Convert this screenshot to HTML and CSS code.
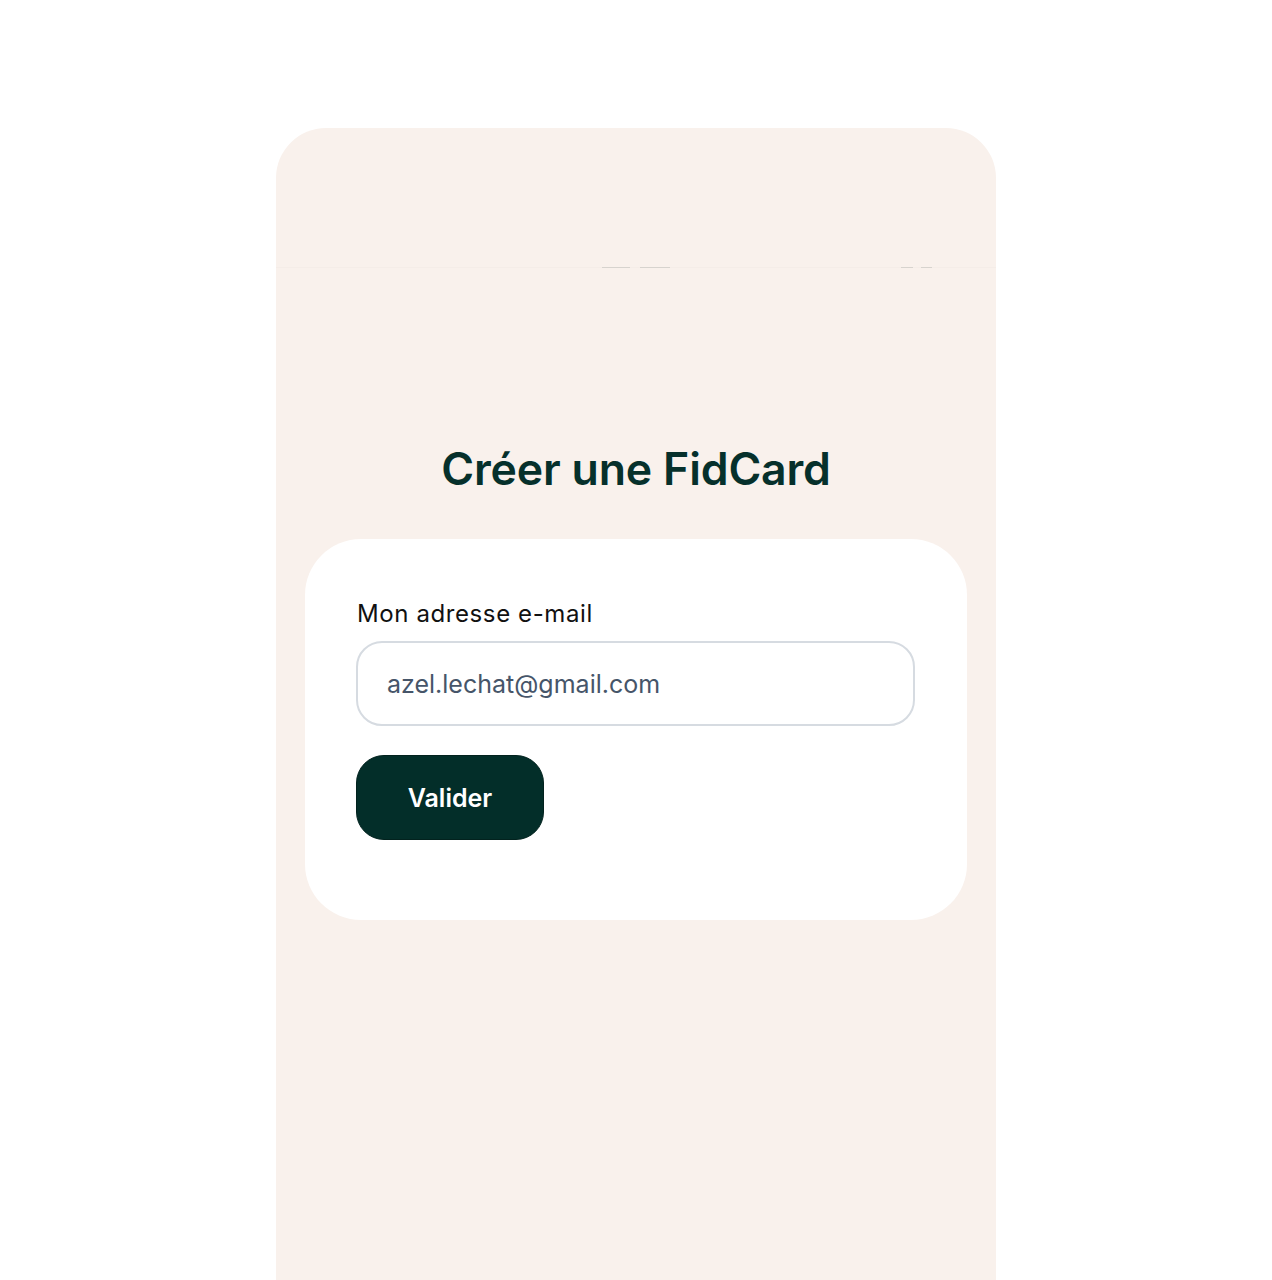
FILE: index.html
```html
<!DOCTYPE html>
<html lang="fr">
<head>
<meta charset="utf-8">
<title>Créer une FidCard</title>
<link rel="stylesheet" href="styles.css">
</head>
<body>
<main class="panel">
  <div class="top-space"></div>
  <div class="edge-line">
    <span class="dash d1"></span>
    <span class="dash d2"></span>
    <span class="dash d3"></span>
    <span class="dash d4"></span>
  </div>
  <h1 class="title">Créer une FidCard</h1>
  <section class="card">
    <label class="label" for="email">Mon adresse e-mail</label>
    <input class="input" id="email" type="email" value="azel.lechat@gmail.com">
    <button class="btn" type="button">Valider</button>
  </section>
</main>
</body>
</html>
```

FILE: styles.css
```css
html, body {
  margin: 0;
  padding: 0;
  background: #ffffff;
}
body {
  font-family: Inter, "Noto Sans", "Liberation Sans", sans-serif;
}
.panel {
  width: 720px;
  margin: 128px auto 0;
  min-height: 1200px;
  background: #f9f1ec;
  border-radius: 50px 50px 0 0;
  box-sizing: border-box;
  padding: 0 29px;
  display: flex;
  flex-direction: column;
}
.top-space {
  height: 139px;
}
.edge-line {
  height: 1px;
  margin: 0 -29px;
  background: #f5ede8;
  display: flex;
}
.dash {
  height: 1px;
  background: #d7d3ce;
}
.d1 { margin-left: 326px; width: 28px; }
.d2 { margin-left: 10px; width: 30px; }
.d3 { margin-left: 231px; width: 12px; }
.d4 { margin-left: 8px; width: 11px; }
.title {
  margin: 175px 0 0;
  font-size: 44.6px;
  line-height: 52px;
  font-weight: 600;
  color: #06302b;
  text-align: center;
  letter-spacing: -0.15px;
}
.card {
  margin-top: 44px;
  background: #ffffff;
  border-radius: 56px;
  padding: 60px 52px 80px 51px;
  display: flex;
  flex-direction: column;
  align-items: flex-start;
}
.label {
  font-size: 24px;
  line-height: 29px;
  color: #111111;
  font-weight: 400;
  letter-spacing: 0.6px;
  margin-left: 1px;
}
.input {
  margin-top: 13px;
  width: 100%;
  height: 85px;
  box-sizing: border-box;
  border: 2px solid #d6dbe1;
  border-radius: 26px;
  padding: 0 29px;
  font-family: Inter, "Noto Sans", "Liberation Sans", sans-serif;
  font-size: 25px;
  color: #465569;
  background: #ffffff;
  outline: none;
}
.btn {
  margin-top: 29px;
  width: 188px;
  height: 85px;
  border: 1px solid #02221e;
  border-radius: 28px;
  background: #032e29;
  color: #ffffff;
  font-family: Inter, "Noto Sans", "Liberation Sans", sans-serif;
  font-size: 25px;
  font-weight: 600;
  padding: 0;
}
```
